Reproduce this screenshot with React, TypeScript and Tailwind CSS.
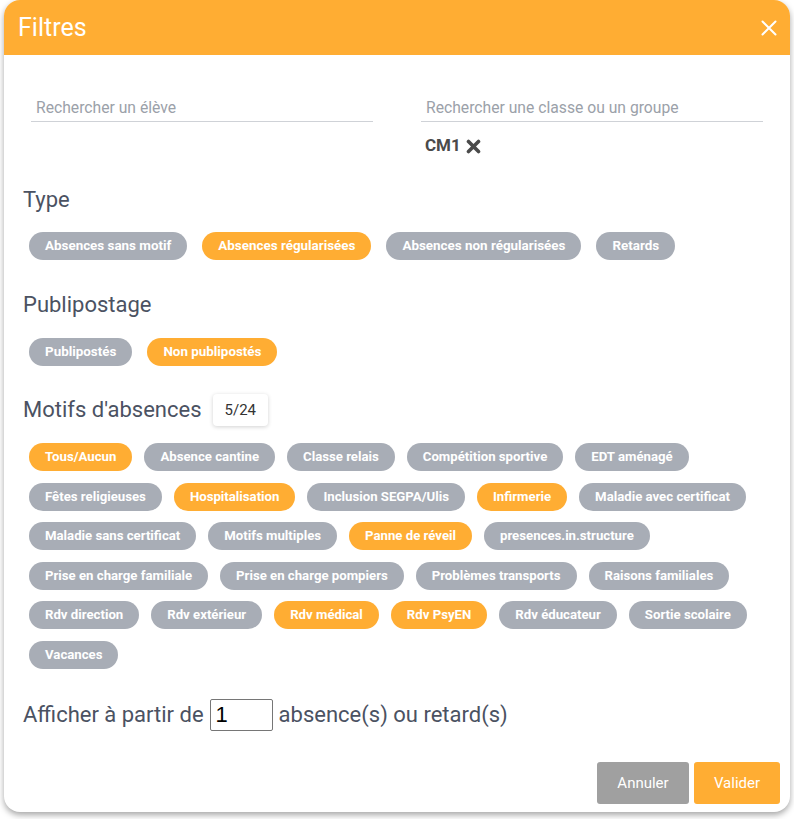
import { useState } from "react";

type Chip = { label: string; on?: boolean };

const types: Chip[] = [
  { label: "Absences sans motif" },
  { label: "Absences régularisées", on: true },
  { label: "Absences non régularisées" },
  { label: "Retards" },
];

const publipostage: Chip[] = [
  { label: "Publipostés" },
  { label: "Non publipostés", on: true },
];

const motifs: Chip[] = [
  { label: "Tous/Aucun", on: true },
  { label: "Absence cantine" },
  { label: "Classe relais" },
  { label: "Compétition sportive" },
  { label: "EDT aménagé" },
  { label: "Fêtes religieuses" },
  { label: "Hospitalisation", on: true },
  { label: "Inclusion SEGPA/Ulis" },
  { label: "Infirmerie", on: true },
  { label: "Maladie avec certificat" },
  { label: "Maladie sans certificat" },
  { label: "Motifs multiples" },
  { label: "Panne de réveil", on: true },
  { label: "presences.in.structure" },
  { label: "Prise en charge familiale" },
  { label: "Prise en charge pompiers" },
  { label: "Problèmes transports" },
  { label: "Raisons familiales" },
  { label: "Rdv direction" },
  { label: "Rdv extérieur" },
  { label: "Rdv médical", on: true },
  { label: "Rdv PsyEN", on: true },
  { label: "Rdv éducateur" },
  { label: "Sortie scolaire" },
  { label: "Vacances" },
];

// motifs are packed a little tighter than the type / publipostage toggles
function ChipList({ items, dense }: { items: Chip[]; dense?: boolean }) {
  return (
    <div
      className={`flex flex-wrap gap-y-[11.5px] pl-[6px] ${
        dense ? "gap-x-[12px]" : "gap-x-[15px]"
      }`}
    >
      {items.map((c) => (
        <span
          key={c.label}
          className={`h-[28px] px-4 flex items-center rounded-full font-bold text-white whitespace-nowrap ${
            dense ? "text-[13.2px]" : "text-[13.4px]"
          } ${c.on ? "bg-[#ffad33]" : "bg-[#a8adb6]"}`}
        >
          {c.label}
        </span>
      ))}
    </div>
  );
}

function SectionTitle({ children }: { children: React.ReactNode }) {
  return <h2 className="text-[22px] leading-[24px] text-[#4b5262]">{children}</h2>;
}

export default function App() {
  const [min, setMin] = useState("1");

  return (
    <div className="min-h-screen bg-white px-[4px] pb-[8px] font-['Roboto',sans-serif]">
      <div className="w-[786px] rounded-[16px] bg-white shadow-[0_3px_6px_rgba(0,0,0,0.35)] overflow-hidden">
        <header className="h-[55px] bg-[#ffad33] flex items-center justify-between pl-[14px] pr-[13px]">
          <h1 className="text-[25px] text-white">Filtres</h1>
          <svg width="16" height="16" viewBox="0 0 16 16" className="text-white">
            <path d="M1.5 1.5 L14.5 14.5 M14.5 1.5 L1.5 14.5" stroke="currentColor" strokeWidth="2" strokeLinecap="round" />
          </svg>
        </header>

        <div className="px-[19px] pb-[8px]">
          <div className="grid grid-cols-2 gap-[48px] px-[8px] pt-[37px]">
            <div className="h-[30px] border-b border-[#cfd2d7] pl-[5px] pt-[3px] flex items-center text-[15.7px] text-[#9ba1a9]">
              Rechercher un élève
            </div>
            <div>
              <div className="h-[30px] border-b border-[#cfd2d7] pl-[5px] pt-[3px] flex items-center text-[15.7px] text-[#9ba1a9]">
                Rechercher une classe ou un groupe
              </div>
              <div className="mt-[14px] h-[20px] pl-[4px] flex items-center gap-[5px] text-[17px] font-bold text-[#4a4a4a]">
                CM1
                <svg width="15" height="15" viewBox="0 0 15 15">
                  <path d="M2.5 2.5 L12.5 12.5 M12.5 2.5 L2.5 12.5" stroke="#4a4a4a" strokeWidth="3.6" strokeLinecap="round" />
                </svg>
              </div>
            </div>
          </div>

          <div className="mt-[32px]">
            <SectionTitle>Type</SectionTitle>
          </div>
          <div className="mt-[20px]">
            <ChipList items={types} />
          </div>

          <div className="mt-[33px]">
            <SectionTitle>Publipostage</SectionTitle>
          </div>
          <div className="mt-[21px]">
            <ChipList items={publipostage} />
          </div>

          <div className="mt-[32px] h-[24px] flex items-center gap-[11px]">
            <SectionTitle>Motifs d'absences</SectionTitle>
            <span className="h-[32px] px-[12px] flex items-center rounded bg-white text-[15px] text-[#333] shadow-[0_1px_4px_rgba(0,0,0,0.18)]">
              5/24
            </span>
          </div>
          <div className="mt-[21px]">
            <ChipList items={motifs} dense />
          </div>

          <div className="mt-[29.5px] flex items-center gap-[6px] text-[22px] text-[#4b5262]">
            <span>Afficher à partir de</span>
            <input
              value={min}
              onChange={(e) => setMin(e.target.value)}
              className="w-[63px] h-[32px] border border-[#767676] rounded-[2px] pl-[5px] text-[22px] text-black font-['Liberation_Sans',sans-serif] outline-none"
            />
            <span>absence(s) ou retard(s)</span>
          </div>

          <div className="mt-[31px] flex justify-end gap-[5px] -mr-[9px]">
            <button className="w-[92px] h-[42px] rounded-[3px] bg-[#a0a0a0] text-white text-[15px]">Annuler</button>
            <button className="w-[86px] h-[42px] rounded-[3px] bg-[#ffad33] text-white text-[15px]">Valider</button>
          </div>
        </div>
      </div>
    </div>
  );
}
